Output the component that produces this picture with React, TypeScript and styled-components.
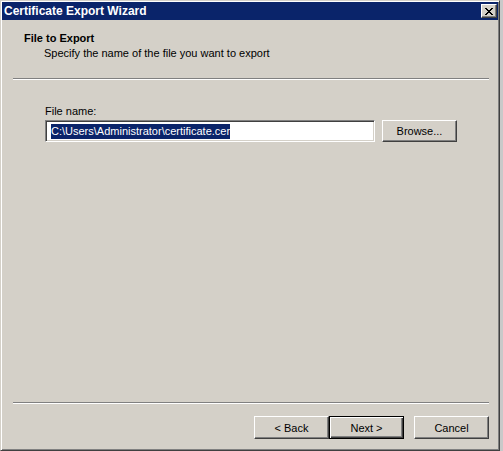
import React from "react";
import styled, { createGlobalStyle } from "styled-components";

const GlobalStyle = createGlobalStyle`
  html, body {
    margin: 0;
    padding: 0;
    background: #c9c9c9;
  }
  body {
    font-family: "Liberation Sans", Tahoma, Arial, sans-serif;
    font-size: 11px;
    color: #000;
  }
`;

const Window = styled.div`
  box-sizing: border-box;
  width: 500px;
  height: 451px;
  padding: 1px;
  display: flex;
  flex-direction: column;
  background: #d4d0c8;
  border-top: 1px solid #d4d0c8;
  border-left: 1px solid #d4d0c8;
  border-right: 1px solid #404040;
  border-bottom: 1px solid #404040;
  box-shadow: inset 1px 1px #ffffff, inset -1px -1px #808080;
`;

const TitleBar = styled.div`
  height: 18px;
  flex: none;
  display: flex;
  align-items: center;
  padding: 0 1px 0 2px;
  background: #0a246a;
`;

const Caption = styled.span`
  flex: 1;
  color: #ffffff;
  font-weight: bold;
  font-size: 12px;
  line-height: 18px;
  white-space: nowrap;
`;

const CloseButton = styled.button`
  box-sizing: border-box;
  width: 16px;
  height: 14px;
  padding: 0;
  margin: 0;
  display: flex;
  align-items: center;
  justify-content: center;
  background: #d4d0c8;
  border-top: 1px solid #ffffff;
  border-left: 1px solid #ffffff;
  border-right: 1px solid #404040;
  border-bottom: 1px solid #404040;
  box-shadow: inset -1px -1px #808080;
`;

const Client = styled.div`
  flex: 1;
  display: flex;
  flex-direction: column;
  padding: 0 9px 10px 11px;
`;

const Header = styled.div`
  padding: 12px 0 0 11px;
`;

const HeaderTitle = styled.div`
  font-weight: bold;
  line-height: 13px;
`;

const HeaderSubtitle = styled.div`
  line-height: 13px;
  margin-top: 2px;
  padding-left: 20px;
`;

const Rule = styled.div<{ $gap: number }>`
  box-sizing: border-box;
  height: 2px;
  margin-top: ${(p) => p.$gap}px;
  border-top: 1px solid #808080;
  border-bottom: 1px solid #ffffff;
`;

const Form = styled.div`
  padding: 25px 0 0 32px;
  display: flex;
  flex-direction: column;
  gap: 2px;
`;

const Label = styled.label`
  line-height: 13px;
`;

const FieldRow = styled.div`
  display: flex;
  gap: 7px;
`;

const TextBox = styled.div`
  box-sizing: border-box;
  width: 330px;
  height: 22px;
  display: flex;
  align-items: center;
  padding-left: 5px;
  background: #ffffff;
  border-top: 1px solid #808080;
  border-left: 1px solid #808080;
  border-right: 1px solid #ffffff;
  border-bottom: 1px solid #ffffff;
  box-shadow: inset 1px 1px #404040, inset -1px -1px #d4d0c8;
`;

const Selection = styled.span`
  background: #0a246a;
  color: #ffffff;
  line-height: 15px;
  white-space: nowrap;
`;

const Spacer = styled.div`
  flex: 1;
`;

const ButtonRow = styled.div`
  display: flex;
  justify-content: flex-end;
  margin-top: 12px;
`;

const PushButton = styled.button<{ $isDefault?: boolean; $gapBefore?: number }>`
  box-sizing: border-box;
  width: 75px;
  height: 23px;
  margin: 0 0 0 ${(p) => p.$gapBefore ?? 0}px;
  padding: 0;
  font-family: "Liberation Sans", Tahoma, Arial, sans-serif;
  font-size: 11px;
  color: #000;
  background: #d4d0c8;
  border-top: 1px solid ${(p) => (p.$isDefault ? "#000" : "#ffffff")};
  border-left: 1px solid ${(p) => (p.$isDefault ? "#000" : "#ffffff")};
  border-right: 1px solid ${(p) => (p.$isDefault ? "#000" : "#404040")};
  border-bottom: 1px solid ${(p) => (p.$isDefault ? "#000" : "#404040")};
  box-shadow: ${(p) =>
    p.$isDefault
      ? "inset 1px 1px #ffffff, inset -1px -1px #404040, inset -2px -2px #808080"
      : "inset -1px -1px #808080"};
`;

const BrowseButton = styled(PushButton)`
  height: 22px;
`;

function CloseGlyph() {
  return (
    <svg width="8" height="7" viewBox="0 0 8 7" shapeRendering="crispEdges">
      <path
        fill="#000"
        d="M0 0h2v1H0zM6 0h2v1H6zM1 1h2v1H1zM5 1h2v1H5zM2 2h4v1H2zM3 3h2v1H3zM2 4h4v1H2zM1 5h2v1H1zM5 5h2v1H5zM0 6h2v1H0zM6 6h2v1H6z"
      />
    </svg>
  );
}

export default function App() {
  return (
    <>
      <GlobalStyle />
      <Window>
        <TitleBar>
          <Caption>Certificate Export Wizard</Caption>
          <CloseButton aria-label="Close">
            <CloseGlyph />
          </CloseButton>
        </TitleBar>
        <Client>
          <Header>
            <HeaderTitle>File to Export</HeaderTitle>
            <HeaderSubtitle>Specify the name of the file you want to export</HeaderSubtitle>
          </Header>
          <Rule $gap={18} />
          <Form>
            <Label>File name:</Label>
            <FieldRow>
              <TextBox>
                <Selection>C:\Users\Administrator\certificate.cer</Selection>
              </TextBox>
              <BrowseButton>Browse...</BrowseButton>
            </FieldRow>
          </Form>
          <Spacer />
          <Rule $gap={0} />
          <ButtonRow>
            <PushButton>&lt; Back</PushButton>
            <PushButton $isDefault>Next &gt;</PushButton>
            <PushButton $gapBefore={10}>Cancel</PushButton>
          </ButtonRow>
        </Client>
      </Window>
    </>
  );
}
